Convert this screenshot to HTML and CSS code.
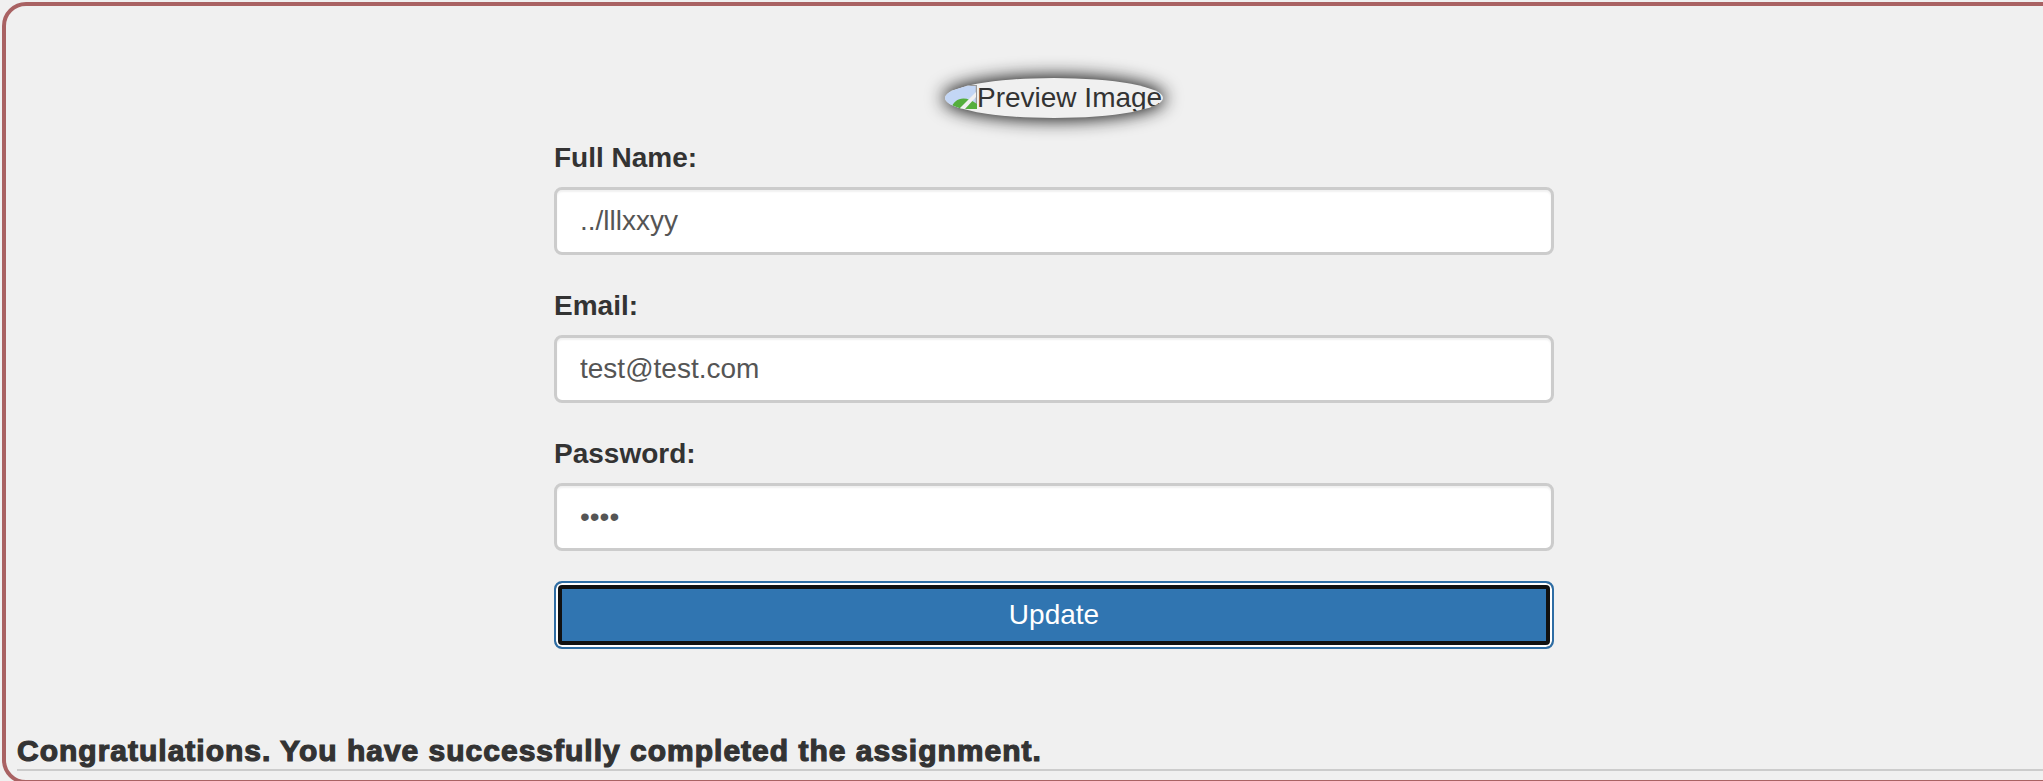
FILE: index.html
```html
<!DOCTYPE html>
<html lang="en">
<head>
<meta charset="utf-8">
<title>Update profile</title>
<link rel="stylesheet" href="styles.css">
</head>
<body>
<main class="frame">
  <div class="preview-row">
    <span class="preview">
      <svg class="broken" width="32" height="24" viewBox="0 0 32 24" aria-hidden="true">
        <rect width="32" height="24" fill="#c3d6f5"/>
        <path d="M31.5 0V24" stroke="#9a9a9a" stroke-width="1.5"/>
        <path d="M0 .5H32" stroke="#9a9a9a" stroke-width="1"/>
        <path d="M6 24 C9 12 21 10 32 19V24Z" fill="#54ae3c"/>
        <path d="M14 24 L31 7 V12 L20 24Z" fill="#f0f0f0"/>
      </svg>
      <span>Preview Image</span>
    </span>
  </div>
  <form class="form">
    <div class="field">
      <label class="label">Full Name:</label>
      <input class="input" type="text" value="../lllxxyy">
    </div>
    <div class="field">
      <label class="label">Email:</label>
      <input class="input" type="text" value="test@test.com">
    </div>
    <div class="field field-last">
      <label class="label">Password:</label>
      <input class="input" type="password" value="test">
    </div>
    <button class="submit" type="button">Update</button>
  </form>
  <h4 class="message">Congratulations. You have successfully completed the assignment.</h4>
  <hr class="rule">
</main>
</body>
</html>
```
FILE: styles.css
```css
* { box-sizing: border-box; }
html, body { height: 100%; }
body {
  margin: 0;
  overflow: hidden;
  background: #f0f0f0;
  font-family: "Liberation Sans", Arial, sans-serif;
  color: #333;
}
.frame {
  width: 2104px;
  height: 782px;
  margin: 2px;
  padding: 72px 11px 0;
  border: 4px solid #a96263;
  border-radius: 24px;
  background: #f0f0f0;
}
.preview-row {
  display: flex;
  justify-content: center;
  height: 40px;
}
.preview {
  display: flex;
  align-items: flex-start;
  width: 218px;
  height: 40px;
  border-radius: 50%;
  overflow: hidden;
  background: #f0f0f0;
  box-shadow: 0 0 18px 2px #111;
  font-size: 28px;
  line-height: 40px;
  white-space: nowrap;
}
.broken { flex: none; margin-top: 7px; }
.form {
  width: 1000px;
  margin: 0 auto;
  padding-top: 21px;
}
.field { margin-bottom: 32px; }
.field-last { margin-bottom: 30px; }
.label {
  display: block;
  height: 48px;
  font-size: 28px;
  font-weight: 700;
  line-height: 38px;
}
.input {
  display: block;
  width: 100%;
  height: 68px;
  padding: 0 23px;
  border: 3px solid #ccc;
  border-radius: 8px;
  background: #fff;
  font-family: inherit;
  font-size: 28px;
  color: #555;
  box-shadow: inset 0 2px 2px rgba(0,0,0,.06);
}
.submit {
  display: block;
  width: 100%;
  height: 68px;
  border: 2px solid #2e6da4;
  border-radius: 8px;
  outline: 0;
  background: #3075b1;
  box-shadow: inset 0 0 0 2px #fff, inset 0 0 0 6px #111;
  font-family: inherit;
  font-size: 28px;
  color: #fff;
}
.message {
  margin: 86px 0 0;
  font-size: 30px;
  font-weight: 700;
  line-height: 32px;
  letter-spacing: 1px;
  -webkit-text-stroke: 1.2px #333;
  white-space: nowrap;
}
.rule {
  margin: 2px 0 0;
  border: 0;
  border-top: 2px solid #ccc;
}
```
